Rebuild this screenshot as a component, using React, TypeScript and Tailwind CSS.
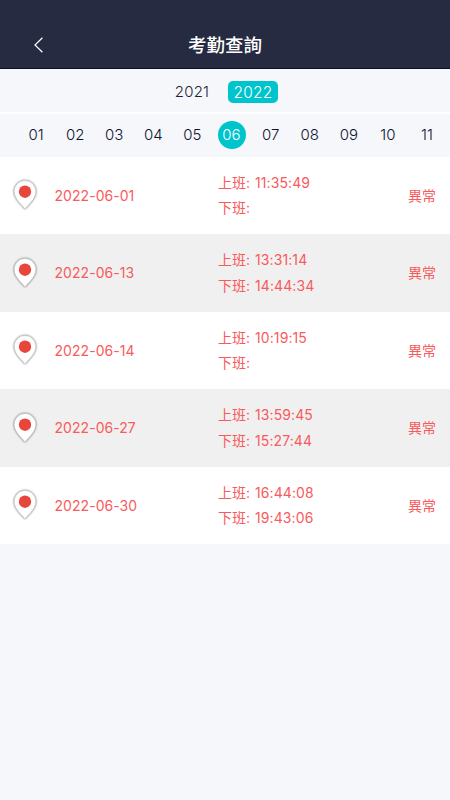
interface AttendanceRecord {
  date: string;
  clockIn: string;
  clockOut: string;
  status: string;
}

const YEARS = ['2021', '2022'];
const MONTHS = ['01', '02', '03', '04', '05', '06', '07', '08', '09', '10', '11'];

const RECORDS: AttendanceRecord[] = [
  { date: '2022-06-01', clockIn: '11:35:49', clockOut: '', status: '異常' },
  { date: '2022-06-13', clockIn: '13:31:14', clockOut: '14:44:34', status: '異常' },
  { date: '2022-06-14', clockIn: '10:19:15', clockOut: '', status: '異常' },
  { date: '2022-06-27', clockIn: '13:59:45', clockOut: '15:27:44', status: '異常' },
  { date: '2022-06-30', clockIn: '16:44:08', clockOut: '19:43:06', status: '異常' },
];

function BackIcon() {
  return (
    <svg viewBox="0 0 9 16" className="w-[9px] h-4" fill="none" stroke="currentColor" strokeWidth="1.2">
      <path d="M8.4 0.7 1 8l7.4 7.3" />
    </svg>
  );
}

function PinIcon() {
  return (
    <svg
      viewBox="0 0 24 32"
      className="w-6 h-8 shrink-0 overflow-visible drop-shadow-[0.5px_0.5px_1px_rgba(0,0,0,0.6)]"
    >
      <path
        d="M12 30C10 26.500 1.200 20.500 1.200 12.400a10.800 10.800 0 0 1 21.600 0C22.800 20.500 14 26.500 12 30Z"
        fill="#fff"
        stroke="#bdbdbd"
        strokeWidth="0.4"
      />
      <circle cx="12" cy="12.700" r="6.200" fill="#e8463a" />
    </svg>
  );
}

function RecordRow({ date, clockIn, clockOut, status }: AttendanceRecord) {
  return (
    <li className="flex items-center h-[77.5px] pl-[13px] pr-[14px] odd:bg-white even:bg-[#f0f0f0]">
      <PinIcon />
      <p className="w-[163.5px] ml-[17.5px] tracking-[0.05px]">{date}</p>
      <div className="flex-1 leading-[25.7px]">
        <p>
          上班: <span className="ml-px tracking-[0.1px]">{clockIn}</span>
        </p>
        <p>
          下班: <span className="ml-px tracking-[0.1px]">{clockOut}</span>
        </p>
      </div>
      <p>{status}</p>
    </li>
  );
}

export default function App() {
  const year = '2022';
  const month = '06';

  return (
    <div className="min-h-screen overflow-hidden bg-[#f5f7fb] font-['Inter','Noto_Sans_CJK_TC',sans-serif]">
      <header className="grid grid-cols-[1fr_auto_1fr] items-center h-[69px] pt-[22px] bg-[#262b41] border-b border-[#0c0e2b] text-white">
        <button type="button" className="ml-[34px] w-6">
          <BackIcon />
        </button>
        <h1 className="text-[18.5px] leading-6 font-medium">考勤查詢</h1>
      </header>

      {/* 年份 */}
      <nav className="flex justify-center items-center gap-[11px] h-[45px] pr-[5px] pt-0.5 border-b-2 border-white text-[#1d1f38]">
        {YEARS.map((y) => (
          <button
            key={y}
            type="button"
            className={
              y === year
                ? 'h-[22px] w-[50px] rounded-[5px] bg-[#00c4cc] text-white text-[15.5px] font-light tracking-[0.2px]'
                : 'h-[22px] w-[50px] text-[15px] font-light tracking-[0.2px]'
            }
          >
            {y}
          </button>
        ))}
      </nav>

      {/* 月份 */}
      <nav className="flex items-center h-[42.5px] pl-[16.5px] text-[15px] font-light text-[#10122e]">
        {MONTHS.map((m) => (
          <button key={m} type="button" className="w-[39.1px] shrink-0 flex justify-center">
            <span
              className={
                m === month
                  ? 'size-7 rounded-full bg-[#00c4cc] text-white leading-7'
                  : 'size-7 leading-7'
              }
            >
              {m}
            </span>
          </button>
        ))}
      </nav>

      <ul className="text-[14px] text-[#f95a5c]">
        {RECORDS.map((r) => (
          <RecordRow key={r.date} {...r} />
        ))}
      </ul>
    </div>
  );
}
